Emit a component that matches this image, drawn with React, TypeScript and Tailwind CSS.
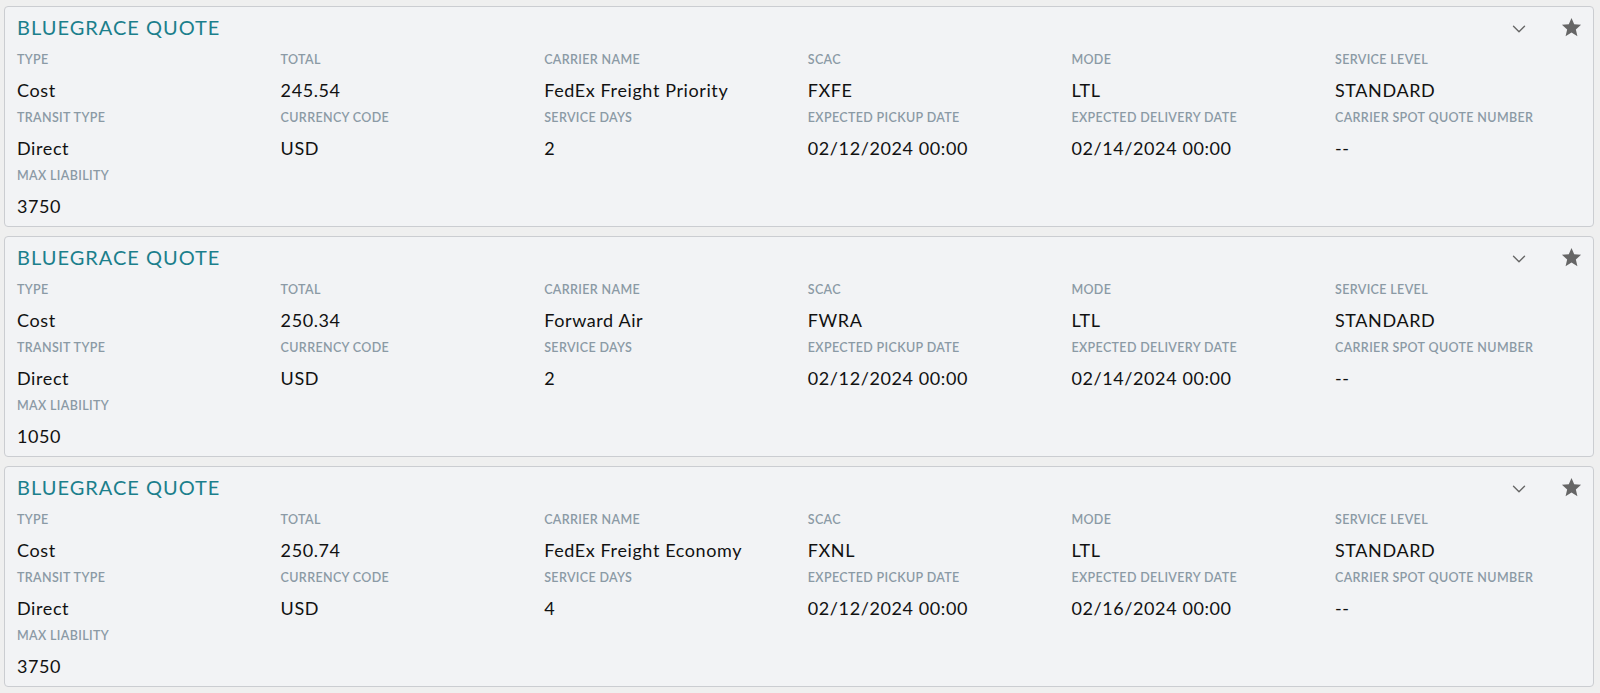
import { ChevronDown } from "lucide-react";

type Quote = {
  type: string;
  total: string;
  carrierName: string;
  scac: string;
  mode: string;
  serviceLevel: string;
  transitType: string;
  currencyCode: string;
  serviceDays: string;
  pickupDate: string;
  deliveryDate: string;
  spotQuoteNumber: string;
  maxLiability: string;
};

const quotes: Quote[] = [
  {
    type: "Cost",
    total: "245.54",
    carrierName: "FedEx Freight Priority",
    scac: "FXFE",
    mode: "LTL",
    serviceLevel: "STANDARD",
    transitType: "Direct",
    currencyCode: "USD",
    serviceDays: "2",
    pickupDate: "02/12/2024 00:00",
    deliveryDate: "02/14/2024 00:00",
    spotQuoteNumber: "--",
    maxLiability: "3750",
  },
  {
    type: "Cost",
    total: "250.34",
    carrierName: "Forward Air",
    scac: "FWRA",
    mode: "LTL",
    serviceLevel: "STANDARD",
    transitType: "Direct",
    currencyCode: "USD",
    serviceDays: "2",
    pickupDate: "02/12/2024 00:00",
    deliveryDate: "02/14/2024 00:00",
    spotQuoteNumber: "--",
    maxLiability: "1050",
  },
  {
    type: "Cost",
    total: "250.74",
    carrierName: "FedEx Freight Economy",
    scac: "FXNL",
    mode: "LTL",
    serviceLevel: "STANDARD",
    transitType: "Direct",
    currencyCode: "USD",
    serviceDays: "4",
    pickupDate: "02/12/2024 00:00",
    deliveryDate: "02/16/2024 00:00",
    spotQuoteNumber: "--",
    maxLiability: "3750",
  },
];

function Field({ label, value }: { label: string; value: string }) {
  return (
    <div>
      <p className="text-[12.5px] leading-4 font-semibold uppercase tracking-[0.35px] text-[#8b9aa5]">
        {label}
      </p>
      <p className="mt-2 text-[18px] leading-7 tracking-[0.6px] text-[#111]">{value}</p>
    </div>
  );
}

function StarIcon() {
  return (
    <svg width="23" height="23" viewBox="0 0 24 24" fill="#666">
      <path d="M12 17.27 18.18 21l-1.64-7.03L22 9.24l-7.19-.61L12 2 9.19 8.63 2 9.24l5.46 4.73L5.82 21z" />
    </svg>
  );
}

function QuoteCard({ quote }: { quote: Quote }) {
  return (
    <section className="rounded-[4px] border border-[#cbcdd1] bg-[#f2f3f5] pt-[6px] pb-[6px]">
      <header className="flex h-7 items-center justify-between pl-3 pr-[10px]">
        <h2 className="text-[20px] leading-7 tracking-[1px] text-[#1b7f8c]">BLUEGRACE QUOTE</h2>
        <div className="flex items-center gap-[30px]">
          <ChevronDown size={22} strokeWidth={1.5} className="mt-[3px] text-[#666]" />
          <StarIcon />
        </div>
      </header>
      <div className="mt-[11px] grid grid-cols-6 gap-x-[17.6px] gap-y-[6px] px-3">
        <Field label="Type" value={quote.type} />
        <Field label="Total" value={quote.total} />
        <Field label="Carrier Name" value={quote.carrierName} />
        <Field label="SCAC" value={quote.scac} />
        <Field label="Mode" value={quote.mode} />
        <Field label="Service Level" value={quote.serviceLevel} />
        <Field label="Transit Type" value={quote.transitType} />
        <Field label="Currency Code" value={quote.currencyCode} />
        <Field label="Service Days" value={quote.serviceDays} />
        <Field label="Expected Pickup Date" value={quote.pickupDate} />
        <Field label="Expected Delivery Date" value={quote.deliveryDate} />
        <Field label="Carrier Spot Quote Number" value={quote.spotQuoteNumber} />
        <Field label="Max Liability" value={quote.maxLiability} />
      </div>
    </section>
  );
}

export default function App() {
  return (
    <div
      className="min-h-screen bg-[#efefef] pt-[6px] pl-1 pr-[6px]"
      style={{ fontFamily: "Lato, 'Noto Sans', sans-serif" }}
    >
      <div className="flex flex-col gap-[9px]">
        {quotes.map((q, i) => (
          <QuoteCard key={i} quote={q} />
        ))}
      </div>
    </div>
  );
}
